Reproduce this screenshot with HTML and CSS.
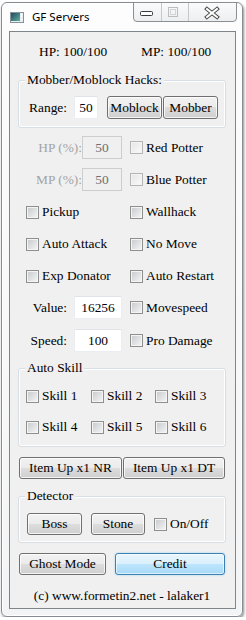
FILE: index.html
```html
<!DOCTYPE html>
<html lang="en">

<head>
    <meta charset="UTF-8">
    <meta name="viewport" content="width=device-width, initial-scale=1.0">
    <title>GF Servers</title>
    <link rel="stylesheet" href="styles.css">
</head>

<body>
    <div class="window">
        <!-- TITLE BAR -->
        <div class="titlebar">
            <svg class="app-icon" width="14" height="11" viewBox="0 0 14 11">
                <defs>
                    <linearGradient id="screen" x1="0" y1="0" x2="1" y2="1">
                        <stop offset="0" stop-color="#1d4a63" />
                        <stop offset="1" stop-color="#62ad9c" />
                    </linearGradient>
                </defs>
                <rect x="0.5" y="0.5" width="13" height="10" fill="#e8edf0" stroke="#87939b" />
                <rect x="1" y="1" width="9" height="8" fill="url(#screen)" />
                <rect x="11" y="2" width="1" height="3" fill="#ffffff" />
                <rect x="11" y="7" width="1" height="1" fill="#ffffff" />
            </svg>
            <span class="title">GF Servers</span>
            <div class="caption">
                <div class="cap-btn cap-min">
                    <svg width="27" height="18" viewBox="0 0 27 18">
                        <rect x="6.5" y="8.5" width="12" height="4" rx="1" fill="#fff" stroke="#3a3a3a" />
                    </svg>
                </div>
                <div class="cap-btn cap-max">
                    <svg width="26" height="18" viewBox="0 0 26 18">
                        <rect x="6.5" y="4.5" width="9" height="9" fill="none" stroke="#bdbdbd" />
                        <rect x="8.5" y="6.5" width="5" height="5" fill="none" stroke="#d3d3d3" />
                    </svg>
                </div>
                <div class="cap-btn cap-close">
                    <svg width="47" height="18" viewBox="0 0 47 18">
                        <path d="M18 6 L28 14 M28 6 L18 14" stroke="#474747" stroke-width="4" stroke-linecap="square" />
                        <path d="M18 6 L28 14 M28 6 L18 14" stroke="#ffffff" stroke-width="2" stroke-linecap="square" />
                    </svg>
                </div>
            </div>
        </div>

        <!-- CLIENT AREA -->
        <main class="client">
            <div class="stats">
                <span class="stat-hp">HP: 100/100</span>
                <span>MP: 100/100</span>
            </div>

            <div class="group group-mob">
                <div class="group-title">Mobber/Moblock Hacks:</div>
                <div class="field-row range-row">
                    <label class="lbl lbl-range">Range:</label>
                    <input class="txt txt-range" type="text" value="50">
                    <button class="btn btn-moblock">Moblock</button>
                    <button class="btn btn-mobber">Mobber</button>
                </div>
            </div>

            <div class="field-row hp-row">
                <label class="lbl lbl-pct off">HP (%):</label>
                <input class="txt txt-pct" type="text" value="50" disabled>
                <span class="chk"><span class="box off"></span>Red Potter</span>
            </div>
            <div class="field-row mp-row">
                <label class="lbl lbl-pct off">MP (%):</label>
                <input class="txt txt-pct" type="text" value="50" disabled>
                <span class="chk"><span class="box off"></span>Blue Potter</span>
            </div>

            <div class="checks">
                <span class="chk"><span class="box"></span>Pickup</span>
                <span class="chk"><span class="box"></span>Wallhack</span>
                <span class="chk"><span class="box"></span>Auto Attack</span>
                <span class="chk"><span class="box"></span>No Move</span>
                <span class="chk"><span class="box"></span>Exp Donator</span>
                <span class="chk"><span class="box"></span>Auto Restart</span>
            </div>

            <div class="field-row value-row">
                <label class="lbl lbl-val">Value:</label>
                <input class="txt txt-val" type="text" value="16256">
                <span class="chk"><span class="box"></span>Movespeed</span>
            </div>
            <div class="field-row speed-row">
                <label class="lbl lbl-val">Speed:</label>
                <input class="txt txt-val" type="text" value="100">
                <span class="chk"><span class="box"></span>Pro Damage</span>
            </div>

            <div class="group group-skill">
                <div class="group-title">Auto Skill</div>
                <div class="skills">
                    <span class="chk"><span class="box"></span>Skill 1</span>
                    <span class="chk"><span class="box"></span>Skill 2</span>
                    <span class="chk"><span class="box"></span>Skill 3</span>
                    <span class="chk"><span class="box"></span>Skill 4</span>
                    <span class="chk"><span class="box"></span>Skill 5</span>
                    <span class="chk"><span class="box"></span>Skill 6</span>
                </div>
            </div>

            <div class="btn-row item-row">
                <button class="btn btn-nr">Item Up x1 NR</button>
                <button class="btn btn-dt">Item Up x1 DT</button>
            </div>

            <div class="group group-det">
                <div class="group-title">Detector</div>
                <div class="btn-row det-row">
                    <button class="btn btn-boss">Boss</button>
                    <button class="btn btn-stone">Stone</button>
                    <span class="chk chk-det"><span class="box"></span>On/Off</span>
                </div>
            </div>

            <div class="btn-row bottom-row">
                <button class="btn btn-ghost">Ghost Mode</button>
                <button class="btn btn-default btn-credit">Credit</button>
            </div>

            <p class="footer">(c) www.formetin2.net - lalaker1</p>
        </main>
    </div>
</body>

</html>
```

FILE: styles.css
```css
* {
    margin: 0;
    padding: 0;
    box-sizing: border-box;
}

body {
    background: #fff;
    font-family: 'Liberation Serif', 'Times New Roman', serif;
    font-size: 13.4px;
    color: #000;
}

/* WINDOW FRAME */
.window {
    width: 242px;
    height: 615px;
    margin: 2px 0 0 1px;
    padding: 0 6px 0 7px;
    border: 1px solid #868c92;
    border-radius: 6px;
    background: linear-gradient(180deg, #fdfdfd 0%, #f3f4f5 100%);
    box-shadow: 1px 2px 3px rgba(0, 0, 0, 0.45), inset 0 0 0 1px #ffffff;
}

.titlebar {
    display: flex;
    align-items: flex-start;
    height: 28px;
    padding-left: 1px;
}

.app-icon {
    margin-top: 9px;
    flex: none;
}

.title {
    margin: 6px 0 0 8px;
    line-height: 16px;
    font-family: 'Noto Sans', 'Open Sans', sans-serif;
    font-size: 11.5px;
}

.caption {
    display: flex;
    margin: -1px -1px 0 auto;
    height: 20px;
    border: 1px solid #8b9095;
    border-radius: 0 0 4px 4px;
    overflow: hidden;
    background: linear-gradient(180deg, #fbfbfc 0%, #eceef0 100%);
}

.cap-btn {
    display: flex;
    height: 18px;
}

.cap-min {
    width: 27px;
}

.cap-max {
    width: 27px;
    border-left: 1px solid #c4c8cc;
}

.cap-close {
    width: 48px;
    border-left: 1px solid #c4c8cc;
}

/* CLIENT */
.client {
    display: block;
    height: 578px;
    border: 1px solid #80858a;
    background: #f0f0f0;
    padding: 0 9px 0 8px;
}

.stats {
    display: flex;
    align-items: center;
    height: 16px;
    margin-top: 12px;
    padding-left: 21px;
}

.stat-hp {
    width: 102px;
}

.group {
    border: 1px solid #d5dfe5;
    border-radius: 3px;
    box-shadow: inset 0 0 0 1px #ffffff;
}

.group-title {
    display: table;
    margin: -9px 0 0 6px;
    padding: 0 2px;
    line-height: 16px;
    background: #f0f0f0;
}

.group-mob {
    margin-top: 20px;
    padding-bottom: 8px;
}

.field-row {
    display: flex;
    align-items: center;
    height: 23px;
}

.range-row {
    margin-top: 8px;
}

.lbl {
    flex: none;
    text-align: right;
}

.lbl.off {
    color: #a3a3a3;
}

.lbl-range {
    width: 48px;
    margin-right: 7px;
}

.lbl-pct {
    width: 64px;
}

.lbl-val {
    width: 49px;
    margin-right: 7px;
}

.txt {
    flex: none;
    height: 23px;
    border: 1px solid #eaeef2;
    border-top-color: #e0e4e8;
    background: #fff;
    font: inherit;
    color: #000;
    text-align: center;
    padding: 0;
    outline: none;
}

.txt:disabled {
    border-color: #cdcdcd;
    background: #f0f0f0;
    color: #6d6d6d;
}

.txt-range {
    width: 24px;
}

.txt-pct {
    width: 40px;
}

.txt-val {
    width: 48px;
}

.field-row .chk {
    margin-left: 8px;
}

.hp-row {
    margin-top: 8px;
}

.mp-row {
    margin-top: 9px;
}

/* CHECKBOXES */
.chk {
    display: flex;
    align-items: center;
    height: 16px;
    white-space: nowrap;
}

.box {
    flex: none;
    width: 13px;
    height: 13px;
    margin-right: 3px;
    border: 1px solid #8e8f8f;
    background: linear-gradient(135deg, #c6c8cb 0%, #f6f6f6 100%);
    box-shadow: inset 0 0 0 1px #f4f4f4;
}

.box.off {
    border-color: #b5b5b5;
    background: linear-gradient(135deg, #e6e6e6 0%, #f9f9f9 100%);
}

.checks {
    display: grid;
    grid-template-columns: 104px 1fr;
    row-gap: 16px;
    margin-top: 13px;
    padding-left: 8px;
}

.value-row {
    margin-top: 12px;
}

.speed-row {
    margin-top: 10px;
}

.group-skill {
    margin-top: 16px;
    padding-bottom: 11px;
}

.skills {
    display: grid;
    grid-template-columns: 65px 64px 1fr;
    row-gap: 15px;
    margin-top: 12px;
    padding-left: 7px;
}

/* BUTTONS */
.btn {
    flex: none;
    height: 23px;
    border: 1px solid #707070;
    border-radius: 3px;
    background: linear-gradient(180deg, #f2f2f2 0%, #ebebeb 49%, #dddddd 50%, #cfcfcf 100%);
    box-shadow: inset 0 0 0 1px rgba(255, 255, 255, 0.75);
    font: inherit;
    color: #000;
    padding: 0;
}

.btn-default {
    border-color: #3c7fb1;
    background: linear-gradient(180deg, #eaf6fd 0%, #d9f0fc 49%, #bee6fd 50%, #a7d9f5 100%);
    box-shadow: inset 0 0 0 1px rgba(255, 255, 255, 0.6), 0 0 2px #8fd3f7;
}

.btn-moblock {
    width: 55px;
    margin-left: 9px;
}

.btn-mobber {
    width: 55px;
    margin-left: 1px;
}

.btn-row {
    display: flex;
    align-items: center;
    height: 22px;
}

.btn-row .btn {
    height: 22px;
}

.item-row {
    margin-top: 10px;
    padding-left: 1px;
}

.btn-nr {
    width: 103px;
}

.btn-dt {
    width: 102px;
    margin-left: 1px;
}

.group-det {
    margin-top: 17px;
    padding-bottom: 7px;
}

.det-row {
    margin-top: 9px;
    padding-left: 8px;
}

.btn-boss {
    width: 55px;
}

.btn-stone {
    width: 54px;
    margin-left: 9px;
}

.chk-det {
    margin-left: 9px;
}

.bottom-row {
    margin-top: 10px;
    padding-left: 1px;
}

.btn-ghost {
    width: 87px;
}

.btn-credit {
    width: 110px;
    margin-left: 9px;
}

.footer {
    margin-top: 13px;
    line-height: 16px;
    text-align: center;
}
```
